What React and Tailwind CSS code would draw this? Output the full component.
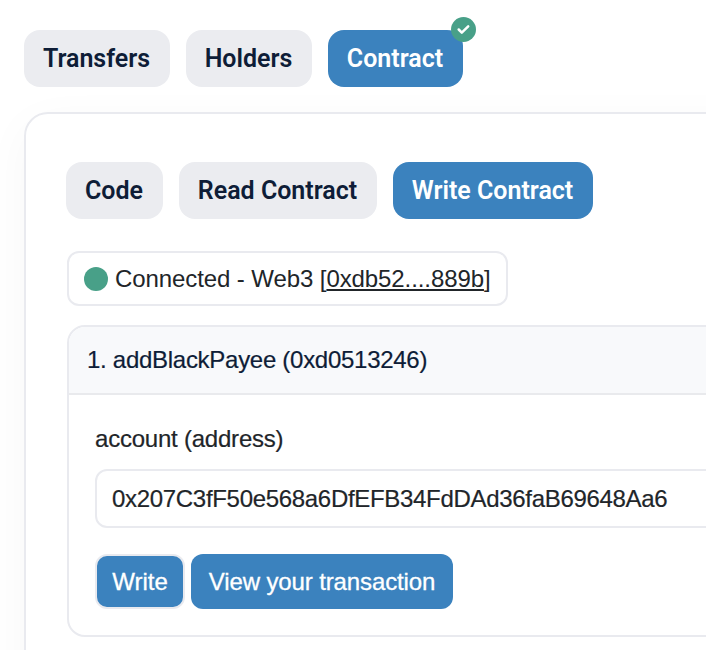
const tabBase = "flex h-[57px] items-center justify-center rounded-[16px] pr-px font-['Roboto',sans-serif] text-[25px] font-semibold";

const TabButton = ({ label, active, className, badge }) => (
  <button
    className={`relative ${tabBase} ${
      active ? "bg-[#3b82be] text-white" : "bg-[#ebecf0] text-[#0e1d37]"
    } ${className}`}
  >
    <span className="whitespace-nowrap">{label}</span>
    {badge}
  </button>
);

const VerifiedBadge = () => (
  <svg viewBox="0 0 25 25" className="absolute -right-[13px] -top-[13px] size-[25px]">
    <circle cx="12.5" cy="12.5" r="12.5" fill="#48a088" />
    <path
      d="M7.7 12.5l3.1 3.1 6.4-6.3"
      fill="none"
      stroke="#fff"
      strokeWidth="2.5"
      strokeLinecap="round"
      strokeLinejoin="round"
    />
  </svg>
);

const App = () => {
  return (
    <div className="h-[650px] w-[706px] overflow-hidden bg-white pl-6 pt-[30px] font-['Liberation_Sans',sans-serif] text-[#212529]">
      <nav className="flex gap-4">
        <TabButton label="Transfers" className="w-[146px]" />
        <TabButton label="Holders" className="w-[126px]" />
        <TabButton label="Contract" active className="w-[135px]" badge={<VerifiedBadge />} />
      </nav>

      <section className="mt-[25px] h-[700px] w-[900px] rounded-[24px] border-2 border-[#e9eaef] px-10 pt-12 shadow-[0_12px_48px_rgba(0,0,0,0.035)]">
        <div className="flex gap-4">
          <TabButton label="Code" className="w-[97px]" />
          <TabButton label="Read Contract" className="w-[198px]" />
          <TabButton label="Write Contract" active className="w-[200px]" />
        </div>

        <div className="ml-px mt-8 flex h-[55px] w-[441px] items-center gap-[7px] rounded-xl border-2 border-[#e9eaef] pl-[15px] text-[24px] tracking-[-0.09px]">
          <span className="size-6 rounded-full bg-[#48a088]" />
          <span className="whitespace-nowrap">
            Connected - Web3 [<span className="underline decoration-2 underline-offset-2">0xdb52....889b</span>]
          </span>
        </div>

        <div className="ml-px mt-[19px] h-[312px] w-[800px] overflow-hidden rounded-[18px] border-2 border-[#e9eaef]">
          <div className="flex h-[68px] items-center border-b-2 border-[#e9eaed] bg-[#f8f9fb] pl-[18px] text-[24px] tracking-[-0.28px] text-[#0e1d37] [-webkit-text-stroke:0.2px]">
            1. addBlackPayee (0xd0513246)
          </div>
          <div className="px-[26px] pt-[26px] text-[24px]">
            <label className="block h-9 leading-9 tracking-[-0.22px] [-webkit-text-stroke:0.2px]">
              account (address)
            </label>
            <div className="mt-3 flex h-[59px] items-center rounded-xl border-2 border-[#e9eaef] pl-[15px] tracking-[-0.31px] [-webkit-text-stroke:0.2px]">
              0x207C3fF50e568a6DfEFB34FdDAd36faB69648Aa6
            </div>
            <div className="mt-[26px] flex gap-1.5 text-white [-webkit-text-stroke:0.3px]">
              <button className="h-[55px] w-[90px] rounded-xl border-2 border-[#e9eaef] bg-[#3b82be]">
                Write
              </button>
              <button className="h-[55px] w-[262px] rounded-xl bg-[#3b82be] tracking-[-0.12px]">
                View your transaction
              </button>
            </div>
          </div>
        </div>
      </section>
    </div>
  );
};

export default App;
